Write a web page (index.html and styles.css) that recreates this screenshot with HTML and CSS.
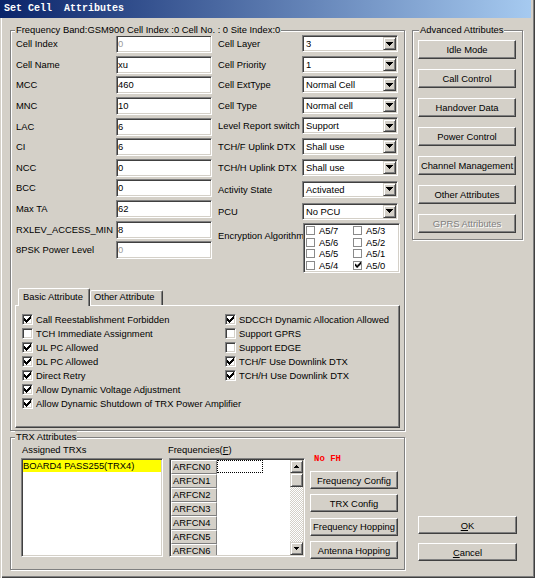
FILE: index.html
```html
<!DOCTYPE html>
<html>
<head>
<meta charset="utf-8">
<link rel="stylesheet" href="styles.css">
</head>
<body>
<svg class="defs" width="0" height="0" aria-hidden="true">
  <symbol id="chk" viewBox="0 0 7 7"><path d="M6 0h1v1h-1zM5 1h2v1h-2zM0 2h1v1h-1zM4 2h3v1h-3zM0 3h2v1h-2zM3 3h3v1h-3zM0 4h5v1h-5zM1 5h3v1h-3zM2 6h1v1h-1z"/></symbol>
  <symbol id="dn7" viewBox="0 0 7 4"><path d="M0 0h7v1h-1v1h-1v1h-1v1h-1v-1h-1v-1h-1v-1h-1z"/></symbol>
  <symbol id="dn5" viewBox="0 0 5 3"><path d="M0 0h5v1h-1v1h-1v1h-1v-1h-1v-1h-1z"/></symbol>
  <symbol id="up5" viewBox="0 0 5 3"><path d="M2 0h1v1h1v1h1v1h-5v-1h1v-1h1z"/></symbol>
</svg>
<div class="win">
  <div class="title">Set Cell  Attributes</div>
  <div class="client">
    <div class="col-left">
      <div class="group g-main">
        <span class="legend">Frequency Band:GSM900 Cell Index :0 Cell No. : 0 Site Index:0</span>
        <div class="fields">
          <div class="col-a">
            <label>Cell Index</label><div class="edit dis">0</div>
            <label>Cell Name</label><div class="edit">xu</div>
            <label>MCC</label><div class="edit">460</div>
            <label>MNC</label><div class="edit">10</div>
            <label>LAC</label><div class="edit">6</div>
            <label>CI</label><div class="edit">6</div>
            <label>NCC</label><div class="edit">0</div>
            <label>BCC</label><div class="edit">0</div>
            <label>Max TA</label><div class="edit">62</div>
            <label>RXLEV_ACCESS_MIN</label><div class="edit">8</div>
            <label>8PSK Power Level</label><div class="edit dis">0</div>
          </div>
          <div class="col-b">
            <label>Cell Layer</label><div class="combo"><span>3</span><i class="drop"><svg><use href="#dn7"/></svg></i></div>
            <label>Cell Priority</label><div class="combo"><span>1</span><i class="drop"><svg><use href="#dn7"/></svg></i></div>
            <label>Cell ExtType</label><div class="combo"><span>Normal Cell</span><i class="drop"><svg><use href="#dn7"/></svg></i></div>
            <label>Cell Type</label><div class="combo"><span>Normal cell</span><i class="drop"><svg><use href="#dn7"/></svg></i></div>
            <label>Level Report switch</label><div class="combo"><span>Support</span><i class="drop"><svg><use href="#dn7"/></svg></i></div>
            <label>TCH/F Uplink DTX</label><div class="combo"><span>Shall use</span><i class="drop"><svg><use href="#dn7"/></svg></i></div>
            <label>TCH/H Uplink DTX</label><div class="combo"><span>Shall use</span><i class="drop"><svg><use href="#dn7"/></svg></i></div>
            <label>Activity State</label><div class="combo"><span>Activated</span><i class="drop"><svg><use href="#dn7"/></svg></i></div>
            <label>PCU</label><div class="combo"><span>No PCU</span><i class="drop"><svg><use href="#dn7"/></svg></i></div>
            <label class="enc">Encryption Algorithm</label>
            <div class="enclist">
              <div class="ei"><i class="sb9"></i>A5/7</div>
              <div class="ei"><i class="sb9"></i>A5/6</div>
              <div class="ei"><i class="sb9"></i>A5/5</div>
              <div class="ei"><i class="sb9"></i>A5/4</div>
              <div class="ei"><i class="sb9"></i>A5/3</div>
              <div class="ei"><i class="sb9"></i>A5/2</div>
              <div class="ei"><i class="sb9"></i>A5/1</div>
              <div class="ei"><i class="sb9"><svg><use href="#chk"/></svg></i>A5/0</div>
            </div>
          </div>
        </div>
        <div class="tabs">
          <div class="tab sel">Basic Attribute</div>
          <div class="tab">Other Attribute</div>
        </div>
        <div class="panel">
          <div class="pcol left">
            <div class="chk"><i class="cb"><svg><use href="#chk"/></svg></i>Call Reestablishment Forbidden</div>
            <div class="chk"><i class="cb"></i>TCH Immediate Assignment</div>
            <div class="chk"><i class="cb"><svg><use href="#chk"/></svg></i>UL PC Allowed</div>
            <div class="chk"><i class="cb"><svg><use href="#chk"/></svg></i>DL PC Allowed</div>
            <div class="chk"><i class="cb"><svg><use href="#chk"/></svg></i>Direct Retry</div>
            <div class="chk"><i class="cb"><svg><use href="#chk"/></svg></i>Allow Dynamic Voltage Adjustment</div>
            <div class="chk"><i class="cb"><svg><use href="#chk"/></svg></i>Allow Dynamic Shutdown of TRX Power Amplifier</div>
          </div>
          <div class="pcol">
            <div class="chk"><i class="cb"><svg><use href="#chk"/></svg></i>SDCCH Dynamic Allocation Allowed</div>
            <div class="chk"><i class="cb"></i>Support GPRS</div>
            <div class="chk"><i class="cb"></i>Support EDGE</div>
            <div class="chk"><i class="cb"><svg><use href="#chk"/></svg></i>TCH/F Use Downlink DTX</div>
            <div class="chk"><i class="cb"><svg><use href="#chk"/></svg></i>TCH/H Use Downlink DTX</div>
          </div>
        </div>
      </div>
      <div class="group g-trx">
        <span class="legend">TRX Attributes</span>
        <div class="trx">
          <div class="tcol1">
            <div class="lbl">Assigned TRXs</div>
            <div class="list"><div class="item sel">BOARD4 PASS255(TRX4)</div></div>
          </div>
          <div class="tcol2">
            <div class="lbl shift">Frequencies(<u>F</u>)</div>
            <div class="fgrid">
              <div class="fcells">
                <div class="frow"><div class="fh">ARFCN0</div><div class="fd focus"></div></div>
                <div class="frow"><div class="fh">ARFCN1</div><div class="fd"></div></div>
                <div class="frow"><div class="fh">ARFCN2</div><div class="fd"></div></div>
                <div class="frow"><div class="fh">ARFCN3</div><div class="fd"></div></div>
                <div class="frow"><div class="fh">ARFCN4</div><div class="fd"></div></div>
                <div class="frow"><div class="fh">ARFCN5</div><div class="fd"></div></div>
                <div class="frow"><div class="fh">ARFCN6</div><div class="fd"></div></div>
              </div>
              <div class="vscroll">
                <i class="sbtn"><svg><use href="#up5"/></svg></i>
                <i class="thumb"></i>
                <i class="track"></i>
                <i class="sbtn"><svg><use href="#dn5"/></svg></i>
              </div>
            </div>
          </div>
          <div class="tcol3">
            <div class="nofh">No FH</div>
            <div class="btn">Frequency Config</div>
            <div class="btn">TRX Config</div>
            <div class="btn">Frequency Hopping</div>
            <div class="btn">Antenna Hopping</div>
          </div>
        </div>
      </div>
    </div>
    <div class="col-right">
      <div class="group g-adv">
        <span class="legend">Advanced Attributes</span>
        <div class="btn">Idle Mode</div>
        <div class="btn">Call Control</div>
        <div class="btn">Handover Data</div>
        <div class="btn">Power Control</div>
        <div class="btn">Channel Management</div>
        <div class="btn">Other Attributes</div>
        <div class="btn disabled">GPRS Attributes</div>
      </div>
      <div class="okc">
        <div class="btn"><span><u>O</u>K</span></div>
        <div class="btn"><span><u>C</u>ancel</span></div>
      </div>
    </div>
  </div>
</div>
</body>
</html>
```
FILE: styles.css
```css
* { box-sizing: border-box; margin: 0; padding: 0; }
body {
  background: #d4d0c8;
  font-family: "Liberation Sans", Arial, sans-serif;
  font-size: 9.4px;
  color: #000;
}
i { font-style: normal; }
.defs { position: absolute; width: 0; height: 0; }

.win {
  width: 535px;
  height: 578px;
  background: #d4d0c8;
  box-shadow: inset 1px 0 #d4d0c8, inset 2px 0 #fff, inset -1px -1px #404040, inset -2px -2px #808080;
  overflow: hidden;
}
.title {
  height: 18px;
  width: 531px;
  background: linear-gradient(90deg, #0a246a, #a6caf0);
  color: #fff;
  font: bold 10px/18px "Liberation Mono", monospace;
  padding-left: 4px;
  white-space: pre;
}
.client { display: flex; gap: 7px; padding: 12px 0 0 10px; }
.col-left { width: 395px; display: flex; flex-direction: column; gap: 6px; }
.col-right { width: 111px; display: flex; flex-direction: column; }

.group {
  position: relative;
  border: 1px solid #808080;
  box-shadow: inset 1px 1px #fff, 1px 1px #fff;
}
.legend {
  position: absolute;
  top: -7px;
  left: 4px;
  padding: 0 1px;
  background: #d4d0c8;
  line-height: 12px;
  white-space: nowrap;
}

/* shared bevels */
.sunken, .edit, .combo, .list, .fgrid, .enclist {
  border: 1px solid;
  border-color: #808080 #fff #fff #808080;
  box-shadow: inset 1px 1px #404040, inset -1px -1px #d4d0c8;
  padding: 1px;
  background: #fff;
}
.btn {
  border: 1px solid;
  border-color: #fff #404040 #404040 #fff;
  box-shadow: inset -1px -1px #808080;
  background: #d4d0c8;
  display: flex;
  align-items: center;
  justify-content: center;
  white-space: nowrap;
}
.btn.disabled { color: #808080; text-shadow: 1px 1px #fff; }

/* main group */
.g-main { height: 401px; padding-top: 4px; }
.fields { display: flex; gap: 6px; margin-left: 5px; height: 238px; }
.col-a {
  display: grid;
  grid-template-columns: 100px 96px;
  grid-auto-rows: 20.65px;
  align-items: start;
}
.col-a label { line-height: 18px; white-space: nowrap; }
.edit { height: 18px; line-height: 14px; padding-left: 1px; }
.edit.dis { color: #9a9a9a; }

.col-b {
  display: grid;
  grid-template-columns: 84px 96px;
  grid-template-rows: 20.5px 20.5px 20.7px 20.7px 20.6px 21px 22px 22px 20px 50px;
  align-items: start;
}
.col-b label { line-height: 17px; white-space: nowrap; }
.col-b label.enc { line-height: 12px; padding-top: 7px; overflow: hidden; width: 85px; }
.combo { height: 17px; display: flex; }
.combo span { flex: 1; line-height: 13px; padding-left: 2px; white-space: nowrap; }
.drop {
  width: 13px;
  height: 13px;
  border: 1px solid;
  border-color: #d4d0c8 #404040 #404040 #d4d0c8;
  box-shadow: inset 1px 1px #fff, inset -1px -1px #808080;
  background: #d4d0c8;
  display: flex;
  align-items: center;
  justify-content: center;
}
.drop svg { width: 7px; height: 4px; display: block; }

.enclist {
  width: 97px;
  height: 50px;
  margin-left: 1px;
  display: grid;
  grid-auto-flow: column;
  grid-template-rows: repeat(4, 11.5px);
  grid-template-columns: 47px 1fr;
  padding: 1px 0 0 2px;
}
.ei { display: flex; align-items: center; gap: 4px; line-height: 11px; }
.sb9 {
  width: 9px;
  height: 9px;
  border: 1px solid #8a8a8a;
  background: #fff;
  display: flex;
  align-items: center;
  justify-content: center;
}
.sb9 svg { width: 6px; height: 6px; display: block; }

/* tabs */
.tabs {
  display: flex;
  align-items: flex-end;
  height: 18px;
  margin: 15px 0 -1px 7px;
  position: relative;
  z-index: 1;
}
.tab {
  width: 73px;
  height: 15px;
  margin-bottom: 1px;
  padding-left: 3px;
  border: 1px solid;
  border-bottom: none;
  border-color: #fff #404040 transparent #fff;
  box-shadow: inset -1px 0 #808080;
  border-radius: 2px 2px 0 0;
  line-height: 12px;
  background: #d4d0c8;
  white-space: nowrap;
}
.tab.sel {
  width: 72px;
  height: 18px;
  margin-bottom: 0;
  padding-left: 4px;
  line-height: 16px;
}
.panel {
  margin-left: 4px;
  width: 385px;
  height: 123px;
  border: 1px solid;
  border-color: #fff #404040 #404040 #fff;
  box-shadow: inset -1px -1px #808080;
  display: flex;
  padding: 6px 0 0 6px;
}
.pcol { display: flex; flex-direction: column; }
.pcol.left { width: 203px; }
.chk { display: flex; align-items: center; gap: 3px; height: 14px; white-space: nowrap; }
.cb {
  width: 11px;
  height: 11px;
  flex: none;
  border: 1px solid;
  border-color: #808080 #fff #fff #808080;
  box-shadow: inset 1px 1px #404040, inset -1px -1px #d4d0c8;
  background: #fff;
  padding: 1px;
}
.cb svg { width: 7px; height: 7px; display: block; }

/* TRX group */
.g-trx { height: 133px; padding: 6px 0 0 10px; }
.trx { display: flex; }
.lbl { line-height: 12px; margin-bottom: 2px; white-space: nowrap; padding-left: 1px; }
.lbl.shift { margin-left: -2px; }
.tcol1 { width: 142px; }
.list { height: 99px; }
.item { line-height: 12px; height: 12px; white-space: nowrap; }
.item.sel { background: #ffff00; }
.tcol2 { width: 136px; margin-left: 6px; }
.fgrid { height: 99px; display: flex; }
.fcells { flex: 1; overflow: hidden; }
.frow { display: flex; height: 14px; }
.fh {
  width: 46px;
  height: 14px;
  background: #d4d0c8;
  border: 1px solid;
  border-color: #fff #808080 #808080 #fff;
  line-height: 12px;
  padding-left: 1px;
}
.fd { width: 46px; height: 14px; }
.fd.focus { border: 1px dotted #000; height: 13px; }
.vscroll { width: 13px; display: flex; flex-direction: column; }
.sbtn, .thumb {
  height: 13px;
  border: 1px solid;
  border-color: #d4d0c8 #404040 #404040 #d4d0c8;
  box-shadow: inset 1px 1px #fff, inset -1px -1px #808080;
  background: #d4d0c8;
  display: flex;
  align-items: center;
  justify-content: center;
}
.thumb { height: 14px; }
.sbtn svg { width: 5px; height: 3px; display: block; }
.track {
  flex: 1;
  background: repeating-conic-gradient(#fff 0 25%, #d4d0c8 0 50%) 0 0 / 2px 2px;
}
.tcol3 { width: 88px; margin-left: 5px; display: flex; flex-direction: column; }
.nofh {
  color: #ff0000;
  font: bold 9px/12px "Liberation Mono", monospace;
  margin: 9px 0 6px 4px;
}
.tcol3 .btn { height: 18px; margin-bottom: 5.4px; }

/* advanced group */
.g-adv {
  height: 210px;
  padding: 9px 0 0 5px;
  display: flex;
  flex-direction: column;
  gap: 10px;
}
.g-adv .legend { left: 6px; }
.g-adv .btn { width: 98px; height: 19px; }
.okc { margin: 276px 0 0 6px; display: flex; flex-direction: column; gap: 9px; }
.okc .btn { width: 99px; height: 18px; }
```
